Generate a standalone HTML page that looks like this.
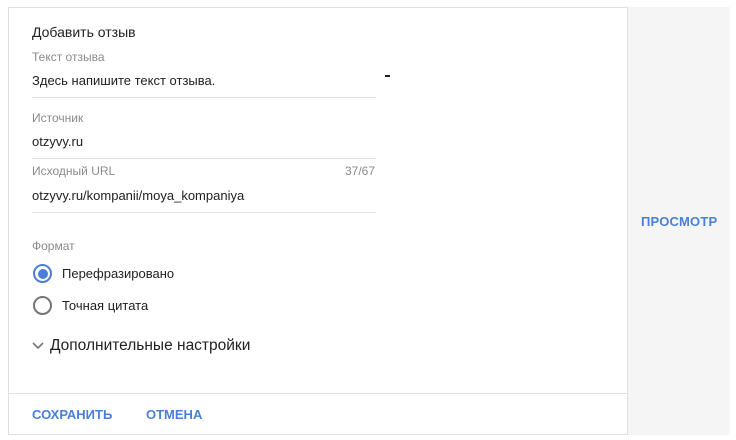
<!DOCTYPE html>
<html><head><meta charset="utf-8"><style>
body{margin:0;width:736px;height:440px;background:#fff;font-family:"Liberation Sans",sans-serif;position:relative;overflow:hidden}
.a{position:absolute;white-space:nowrap}
.card{position:absolute;left:8px;top:7px;width:620px;height:428px;border:1px solid #e0e0e0;box-sizing:border-box;background:#fff}
.side{position:absolute;left:628px;top:7px;width:102px;height:428px;background:#f5f5f6}
.lbl{font-size:12px;color:#8a8a8a}
.val{font-size:13px;color:#202124}
.ln{position:absolute;left:32px;width:344px;height:1px;background:#e0e0e0}
.btn{font-size:13px;font-weight:bold;color:#4a7fd8}
</style></head><body>
<div class="card"></div>
<div class="side"></div>
<div class="a" style="left:8px;top:393px;width:620px;height:1px;background:#e0e0e0"></div>
<div class="a val" style="left:32px;top:24px;font-size:14px">Добавить отзыв</div>
<div class="a lbl" style="left:32px;top:50px">Текст отзыва</div>
<div class="a val" style="left:32px;top:73px">Здесь напишите текст отзыва.</div>
<div class="a" style="left:385px;top:75px;width:5px;height:2px;background:#202124"></div>
<div class="ln" style="top:97px"></div>
<div class="a lbl" style="left:32px;top:111px">Источник</div>
<div class="a val" style="left:32px;top:134px">otzyvy.ru</div>
<div class="ln" style="top:158px"></div>
<div class="a lbl" style="left:32px;top:164px">Исходный URL</div>
<div class="a lbl" style="left:345px;top:164px">37/67</div>
<div class="a val" style="left:32px;top:188px">otzyvy.ru/kompanii/moya_kompaniya</div>
<div class="ln" style="top:212px"></div>
<div class="a lbl" style="left:32px;top:239px">Формат</div>
<div class="a" style="left:33px;top:264px;width:19px;height:19px;border:2px solid #4a7fd8;border-radius:50%;box-sizing:border-box"></div>
<div class="a" style="left:37.5px;top:268.5px;width:10px;height:10px;background:#4a7fd8;border-radius:50%"></div>
<div class="a val" style="left:62px;top:266px">Перефразировано</div>
<div class="a" style="left:33px;top:296px;width:19px;height:19px;border:2px solid #757575;border-radius:50%;box-sizing:border-box"></div>
<div class="a val" style="left:62px;top:298px">Точная цитата</div>
<svg class="a" style="left:32px;top:341px" width="12" height="10"><path d="M1 2l5 5 5-5" fill="none" stroke="#757575" stroke-width="1.6"/></svg>
<div class="a val" style="left:50px;top:337px;font-size:15.5px">Дополнительные настройки</div>
<div class="a btn" style="left:32px;top:407px">СОХРАНИТЬ</div>
<div class="a btn" style="left:146px;top:407px">ОТМЕНА</div>
<div class="a btn" style="left:641px;top:214px;letter-spacing:0.2px">ПРОСМОТР</div>
</body></html>
